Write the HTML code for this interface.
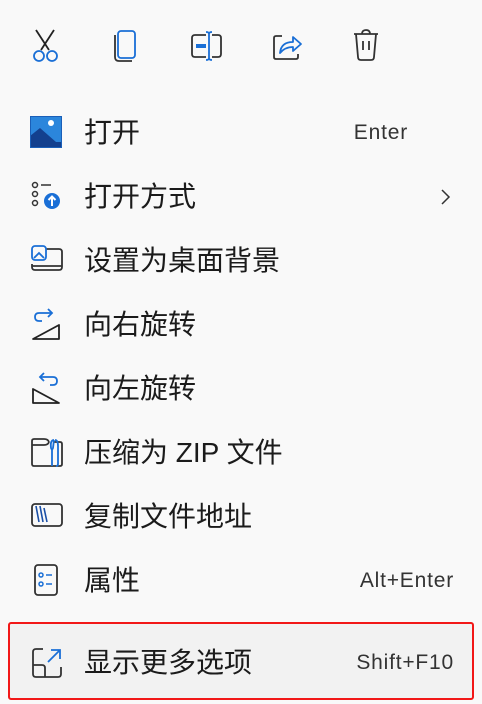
<!DOCTYPE html>
<html><head><meta charset="utf-8"><style>
html,body{margin:0;padding:0;width:482px;height:704px;background:#f9f9f9;overflow:hidden;font-family:"Liberation Sans","Noto Sans CJK SC",sans-serif;color:#1a1a1a}
.row{position:absolute;left:0;width:482px;height:40px}
.lab{position:absolute;left:84px;top:0;line-height:42px;font-size:28px;color:#1b1b1b;white-space:nowrap}
.sc{position:absolute;right:28px;top:0;line-height:42px;font-size:21px;letter-spacing:0.8px;color:#333;white-space:nowrap}
.hl{position:absolute;left:8px;top:622px;width:462px;height:74px;border:2px solid #f21818;border-radius:3px;background:#f2f2f2}
svg{position:absolute;overflow:visible}
</style></head><body>
<svg style="left:30px;top:28px" width="34" height="36" viewBox="0 0 34 36" fill="none" stroke-width="1.8">
<path d="M6 2 L19 22 M24 2 L11 22" stroke="#222"/>
<circle cx="9" cy="28" r="5" stroke="#1a6fd6"/><circle cx="22" cy="28" r="5" stroke="#1a6fd6"/>
</svg>
<svg style="left:112px;top:30px" width="30" height="32" viewBox="0 0 30 32" fill="none" stroke-width="1.8">
<rect x="6" y="1" width="17" height="27" rx="3" stroke="#1a6fd6"/>
<path d="M3 5 V27 Q3 31 7 31 H20" stroke="#333"/>
</svg>
<svg style="left:190px;top:30px" width="34" height="32" viewBox="0 0 34 32" fill="none" stroke-width="1.8">
<path d="M16 5 H5 Q2 5 2 8 V24 Q2 27 5 27 H16" stroke="#333"/>
<path d="M22 5 H28 Q31 5 31 8 V24 Q31 27 28 27 H22" stroke="#333"/>
<rect x="6" y="14" width="10" height="4" fill="#1a6fd6" stroke="none"/>
<path d="M16 2 Q19 2 19 4 V28 Q19 30 16 30 M22 2 Q19 2 19 4 M22 30 Q19 30 19 28" stroke="#1a6fd6"/>
</svg>
<svg style="left:272px;top:30px" width="32" height="32" viewBox="0 0 32 32" fill="none" stroke-width="1.8">
<path d="M10 6 H4 Q2 6 2 8 V27 Q2 29 4 29 H24 Q26 29 26 27 V24" stroke="#333"/>
<path d="M8 23 Q9 12 21 12 V7 L29 14 L21 21 V17 Q13 17 8 23 Z" stroke="#1a6fd6" stroke-linejoin="round"/>
</svg>
<svg style="left:352px;top:28px" width="28" height="34" viewBox="0 0 28 34" fill="none" stroke-width="1.8" stroke="#333">
<path d="M2 6 H26 M10 6 Q10 2 14 2 Q18 2 18 6 M4 6 L6 29 Q6 32 9 32 H19 Q22 32 22 29 L24 6 M11 13 V22 M17 13 V22"/>
</svg>

<div class="row" style="top:112px">
<svg style="left:30px;top:4px" width="32" height="32" viewBox="0 0 32 32">
<rect x="0" y="0" width="32" height="32" fill="#2b86dc"/>
<path d="M0 20 L10 12 L26 26 L32 26 V32 H0 Z" fill="#13408e"/>
<circle cx="21" cy="7" r="3" fill="#fff"/>
<rect x="0.5" y="0.5" width="31" height="31" fill="none" stroke="#1a5fb8"/>
</svg>
<div class="lab">打开</div><div class="sc" style="right:74px">Enter</div></div>

<div class="row" style="top:176px">
<svg style="left:31px;top:5px" width="32" height="32" viewBox="0 0 32 32" fill="none" stroke="#333" stroke-width="1.5">
<circle cx="4" cy="4" r="2.5"/><circle cx="4" cy="13" r="2.5"/><circle cx="4" cy="22" r="2.5"/>
<path d="M10 4 H20"/>
<circle cx="21" cy="20" r="8" fill="#1a6fd6" stroke="none"/>
<path d="M21 25 V16 M17.5 19 L21 15.5 L24.5 19" stroke="#fff" stroke-width="2"/>
</svg>
<div class="lab">打开方式</div>
<svg style="left:440px;top:13px" width="10" height="16" viewBox="0 0 10 16" fill="none" stroke="#333" stroke-width="1.5"><path d="M2 1 L9 8 L2 15"/></svg>
</div>

<div class="row" style="top:240px">
<svg style="left:30px;top:5px" width="34" height="30" viewBox="0 0 34 30" fill="none" stroke-width="1.8">
<path d="M16 4 H29 Q32 4 32 7 V22 Q32 25 29 25 H5 Q2 25 2 22 V19" stroke="#333"/>
<path d="M2 21 H32" stroke="#333"/>
<rect x="2" y="1" width="14" height="14" rx="3" stroke="#1a6fd6"/>
<path d="M4 13 L9 8 L14 13" stroke="#1a6fd6"/>
</svg>
<div class="lab">设置为桌面背景</div></div>

<div class="row" style="top:304px">
<svg style="left:31px;top:4px" width="32" height="32" viewBox="0 0 32 32" fill="none" stroke-width="1.8">
<path d="M20 5 H8 Q4 5 4 9 Q4 13 8 13 H11" stroke="#1a6fd6"/><path d="M17 1 L21 5 L17 9" stroke="#1a6fd6"/>
<path d="M2 31 L28 17 V31 Z" stroke="#222" stroke-linejoin="round"/>
</svg>
<div class="lab">向右旋转</div></div>

<div class="row" style="top:368px">
<svg style="left:31px;top:4px" width="32" height="32" viewBox="0 0 32 32" fill="none" stroke-width="1.8">
<path d="M10 5 H22 Q26 5 26 9 Q26 13 22 13 H19" stroke="#1a6fd6"/><path d="M13 1 L9 5 L13 9" stroke="#1a6fd6"/>
<path d="M2 17 V31 H28 Z" stroke="#222" stroke-linejoin="round"/>
</svg>
<div class="lab">向左旋转</div></div>

<div class="row" style="top:432px">
<svg style="left:30px;top:4px" width="34" height="32" viewBox="0 0 34 32" fill="none" stroke-width="1.8">
<path d="M24 6 H30 Q32 6 32 8 V28 Q32 30 30 30 H4 Q2 30 2 28 V5 Q2 3 4 3 H14 Q18 3 19 6" stroke="#333"/>
<path d="M2 9 H14 Q18 9 19 6" stroke="#333"/>
<path d="M24 4 Q20 4 21 12 L22 14 L23 12 Q24 4 24 4 M22 14 V30" stroke="#1a6fd6"/>
<path d="M25 4 Q28 4 28 10 V28 Q28 30 26 30" stroke="#1a6fd6"/>
</svg>
<div class="lab">压缩为 ZIP 文件</div></div>

<div class="row" style="top:496px">
<svg style="left:30px;top:6px" width="34" height="28" viewBox="0 0 34 28" fill="none" stroke-width="1.8">
<rect x="2" y="2" width="30" height="22" rx="3" stroke="#333"/>
<path d="M6 4 L9 20 M10 4 L13 20 M14 6 L17 20" stroke="#1a4fa6" stroke-width="1.6"/>
</svg>
<div class="lab">复制文件地址</div></div>

<div class="row" style="top:560px">
<svg style="left:34px;top:4px" width="26" height="34" viewBox="0 0 26 34" fill="none" stroke-width="1.8">
<rect x="1" y="1" width="22" height="30" rx="3" stroke="#333"/>
<circle cx="7" cy="11" r="2" stroke="#1a6fd6" stroke-width="1.5"/><circle cx="7" cy="20" r="2" stroke="#1a6fd6" stroke-width="1.5"/>
<path d="M12 11 H18 M12 20 H18" stroke="#1a6fd6" stroke-width="1.5"/>
</svg>
<div class="lab">属性</div><div class="sc">Alt+Enter</div></div>

<div class="hl"></div>
<div class="row" style="top:642px">
<svg style="left:31px;top:5px" width="32" height="32" viewBox="0 0 32 32" fill="none" stroke-width="1.8">
<path d="M12 2 H5 Q2 2 2 5 V27 Q2 30 5 30 H27 Q30 30 30 27 V20" stroke="#333"/>
<path d="M2 18 H11 Q14 18 14 21 V30" stroke="#333"/>
<path d="M17 15 L29 3 M20 3 H29 V12" stroke="#1a6fd6"/>
</svg>
<div class="lab">显示更多选项</div><div class="sc">Shift+F10</div></div>
</body></html>
